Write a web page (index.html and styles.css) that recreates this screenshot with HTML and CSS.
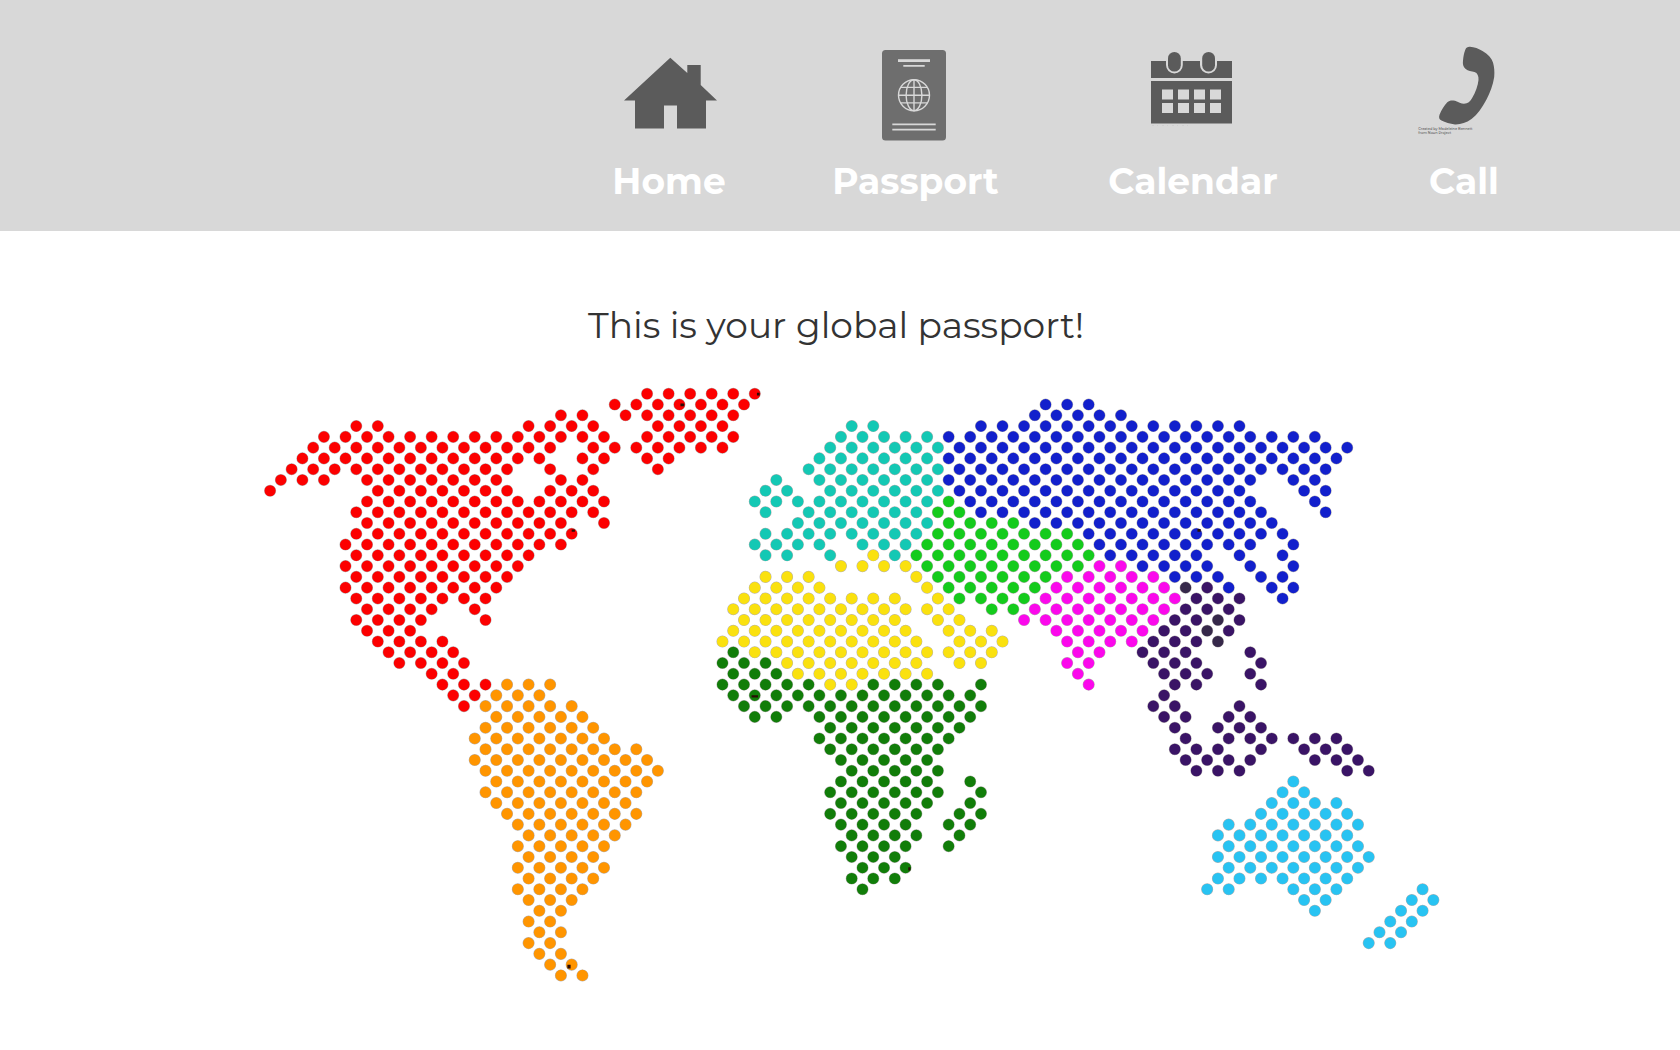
FILE: index.html
```html
<!DOCTYPE html>
<html lang="en">
<head>
<meta charset="utf-8">
<title>Global Passport</title>
<link rel="stylesheet" href="styles.css">
</head>
<body>
<header class="site-header">
  <nav class="nav">
    <a class="nav-item">
      <svg class="icon" viewBox="0 0 120 100"><path d="M60.3 17.7L77.3 33V25H90.7V45L107 60.5H96V88.4H67V65.6H54V88.4H25V60.5H14Z"/></svg>
      <span class="label label-home">Home</span>
    </a>
    <a class="nav-item">
      <svg class="icon icon-passport" viewBox="0 0 120 100">
        <rect x="26" y="10" width="64" height="90.4" rx="3.5"/>
        <g class="lines">
          <path stroke-width="2.8" d="M42 20.6H74"/>
          <path stroke-width="1.7" d="M47.3 25.9H68.7M36.3 84.4H79.7M36.3 89.7H79.7"/>
          <circle cx="58" cy="55.2" r="15.5"/>
          <ellipse cx="58" cy="55.2" rx="7.9" ry="15.5"/>
          <path d="M58 39.7V70.7M42.5 55.3H73.5M45 47.4H71M45 62.9H71"/>
        </g>
      </svg>
      <span class="label label-passport">Passport</span>
    </a>
    <a class="nav-item">
      <svg class="icon" viewBox="0 0 120 100">
        <path d="M18 21H33V25A8.4 8.4 0 0 0 49.8 25V21H67V25A8.5 8.4 0 0 0 84 25V21H99V38H18Z"/>
        <rect x="35" y="12" width="12.8" height="19.6" rx="6.4"/>
        <rect x="69.2" y="12" width="12.8" height="19.6" rx="6.4"/>
        <path fill-rule="evenodd" d="M18 41H99V83.4H18ZM29 49.5V59.6H40V49.5ZM45 49.5V59.6H56V49.5ZM61 49.5V59.6H72V49.5ZM77 49.5V59.6H88V49.5ZM29 63V73H40V63ZM45 63V73H56V63ZM61 63V73H72V63ZM77 63V73H88V63Z"/>
        <path class="trace" d="M19 85.5H55"/>
      </svg>
      <span class="label">Calendar</span>
    </a>
    <a class="nav-item">
      <svg class="icon" viewBox="0 0 120 100">
        <path d="M67 6.8C71 7 76 8.8 79.5 11C85 14.2 88.5 18 90 22.5C91.3 27 91.7 32 91.2 37C90 45 87 53 83.5 59.5C79 68 74 75 68.5 79C63 83 57.5 84.6 52 84.4C47 84 42 82.5 38.5 80.6C36 79.2 35.6 77.5 36.6 74.5C38.500 69.500 41.500 65.500 44.300 62.300C46.500 60.200 49 60.200 52 60.800C55.500 61.800 58 63.800 61 63.800C65 63.600 67 61.500 69 58.300C72.500 52.500 75 45.500 75.500 40C75.800 36 74.500 33 71.500 32C68.500 31 65 31 62.700 29C60 26.800 59.600 24 60 20.500C60.400 16.500 61 13 62.300 9.800C63.200 7.500 64.700 6.700 67 6.800Z"/>
        <text class="credit" x="15.3" y="90">Created by Madeleine Bennett</text>
        <text class="credit" x="15.3" y="93.7">from Noun Project</text>
      </svg>
      <span class="label label-call">Call</span>
    </a>
  </nav>
</header>
<main class="content">
  <h1 class="title">This is your global passport!</h1>
  <svg class="map" viewBox="-1.03 -1 110 56">
    <defs>
      <path id="north-america" d="M35 0H45.1M32 1H44.1M27 2H29.1M33 2H43.1M8 3H10.1M24 3H30.1M36 3H42.1M5 4H31.1M35 4H43.1M4 5H26.1M30 5H42.1M3 6H25.1M29 6H31.1M35 6H37.1M2 7H22.1M26 7h.1M30 7h.1M36 7h.1M1 8H5.1M9 8H21.1M27 8H29.1M0 9h.1M10 9H22.1M26 9H30.1M9 10H31.1M8 11H30.1M9 12H27.1M31 12h.1M8 13H28.1M7 14H27.1M8 15H24.1M7 16H23.1M8 17H22.1M7 18H21.1M8 19H20.1M9 20H15.1M19 20h.1M8 21H14.1M20 21h.1M9 22H13.1M10 23H16.1M11 24H17.1M12 25H18.1M15 26H17.1M16 27H20.1M17 28H19.1M18 29h.1"/>
      <path id="south-america" d="M22 27H26.1M21 28H25.1M20 29H28.1M21 30H29.1M20 31H30.1M19 32H31.1M20 33H34.1M19 34H35.1M20 35H36.1M21 36H35.1M20 37H34.1M21 38H33.1M22 39H34.1M23 40H33.1M24 41H32.1M23 42H31.1M24 43H30.1M23 44H31.1M24 45H30.1M23 46H29.1M24 47H28.1M25 48H27.1M24 49H26.1M25 50H27.1M24 51H26.1M25 52H27.1M26 53H28.1M27 54H29.1"/>
      <path id="europe" d="M54 3H56.1M53 4H61.1M52 5H62.1M51 6H61.1M50 7H62.1M47 8h.1M51 8H61.1M46 9H48.1M52 9H62.1M45 10H49.1M51 10H61.1M46 11h.1M50 11H60.1M49 12H61.1M46 13H60.1M45 14H51.1M55 14H59.1M46 15H48.1M52 15h.1M58 15h.1"/>
      <path id="north-africa" d="M56 15h.1M53 16H59.1M46 17H50.1M60 17h.1M45 18H51.1M61 18h.1M44 19H58.1M62 19h.1M43 20H63.1M44 21H58.1M62 21H64.1M43 22H59.1M63 22H67.1M42 23H60.1M64 23H68.1M45 24H67.1M48 25H60.1M64 25H66.1M49 26H61.1M52 27H54.1"/>
      <path id="africa" d="M43 24h.1M42 25H46.1M43 26H47.1M42 27H50.1M56 27H62.1M66 27h.1M43 28H65.1M44 29H66.1M45 30H47.1M51 30H65.1M52 31H64.1M51 32H63.1M52 33H62.1M53 34H61.1M54 35H62.1M53 36H61.1M65 36h.1M52 37H62.1M66 37h.1M53 38H61.1M65 38h.1M52 39H60.1M64 39H66.1M53 40H59.1M63 40H65.1M54 41H60.1M64 41h.1M53 42H59.1M63 42h.1M54 43H58.1M55 44H59.1M54 45H58.1M55 46h.1"/>
      <path id="russia" d="M72 1H76.1M71 2H79.1M66 3H90.1M63 4H97.1M64 5H100.1M63 6H99.1M64 7H98.1M63 8H91.1M95 8H97.1M64 9H90.1M96 9H98.1M65 10H91.1M97 10h.1M66 11H92.1M98 11h.1M71 12H93.1M76 13H94.1M77 14H91.1M95 14h.1M78 15H86.1M90 15h.1M94 15h.1M81 16H87.1M91 16h.1M95 16h.1M84 17H88.1M92 17H94.1M89 18h.1M93 18H95.1M94 19h.1"/>
      <path id="central-asia" d="M63 10h.1M62 11H64.1M63 12H69.1M62 13H74.1M61 14H75.1M60 15H76.1M61 16H75.1M62 17H72.1M63 18H71.1M64 19H70.1M67 20H69.1"/>
      <path id="south-asia" d="M77 16H79.1M74 17H82.1M73 18H83.1M72 19H84.1M71 20H83.1M70 21H82.1M73 22H81.1M74 23H80.1M75 24H77.1M74 25H76.1M75 26h.1M76 27h.1"/>
      <path id="east-asia" d="M87 18h.1M86 19H90.1M85 20H89.1M84 21H86.1M90 21h.1M83 22H85.1M89 22h.1M82 23H86.1M81 24H85.1M91 24h.1M82 25H86.1M92 25h.1M83 26H87.1M91 26h.1M84 27H86.1M92 27h.1M83 28h.1M82 29H84.1M90 29h.1M83 30H85.1M89 30H91.1M84 31h.1M88 31H92.1M85 32h.1M89 32H93.1M95 32H99.1M84 33H88.1M92 33h.1M96 33H100.1M85 34H91.1M97 34H101.1M86 35H90.1M100 35H102.1"/>
      <path id="korea" d="M85 18h.1M88 21h.1M87 22h.1M88 23h.1"/>
      <path id="oceania" d="M95 36h.1M94 37H96.1M93 38H99.1M92 39H100.1M89 40H101.1M88 41H100.1M89 42H101.1M88 43H102.1M89 44H101.1M88 45H100.1M87 46H89.1M95 46H99.1M107 46h.1M96 47H98.1M106 47H108.1M97 48h.1M105 48H107.1M104 49H106.1M103 50H105.1M102 51H104.1"/>
    </defs>
    <g class="region red"><use class="rim" href="#north-america"/><use href="#north-america"/></g>
    <g class="region orange"><use class="rim" href="#south-america"/><use href="#south-america"/></g>
    <g class="region teal"><use class="rim" href="#europe"/><use href="#europe"/></g>
    <g class="region yellow"><use class="rim" href="#north-africa"/><use href="#north-africa"/></g>
    <g class="region green"><use class="rim" href="#africa"/><use href="#africa"/></g>
    <g class="region blue"><use class="rim" href="#russia"/><use href="#russia"/></g>
    <g class="region lime"><use class="rim" href="#central-asia"/><use href="#central-asia"/></g>
    <g class="region magenta"><use class="rim" href="#south-asia"/><use href="#south-asia"/></g>
    <g class="region purple"><use class="rim" href="#east-asia"/><use href="#east-asia"/></g>
    <g class="region slate"><use class="rim" href="#korea"/><use href="#korea"/></g>
    <g class="region sky"><use class="rim" href="#oceania"/><use href="#oceania"/></g>
    <g class="specks"><path d="M45.200 -.1h.25v.25h-.25zM38.100 .9h.35v.25h-.35zM28 12.600h.3v.2h-.3zM27.600 53h.3v.35h-.3zM44.700 28h.6v.2h-.6zM59.250 43.950h.2v.3h-.2zM86.100 12.550h.3v.25h-.3z"/></g>
  </svg>
</main>
</body>
</html>
```

FILE: styles.css
```css
body {
  margin: 0;
  background: #fff;
  font-family: Montserrat, Inter, "Open Sans", sans-serif;
  color: #333;
}

.site-header {
  height: 231px;
  background: #d8d8d8;
}

.nav {
  display: grid;
  grid-template-columns: 248px 244px 310px 230px;
  padding: 40px 0 0 546px;
}

.nav-item {
  display: flex;
  flex-direction: column;
  align-items: center;
}

.icon {
  width: 120px;
  height: 100px;
  overflow: visible;
  fill: #5b5b5b;
}

.icon-passport {
  fill: #6e6e6e;
}

.lines {
  fill: none;
  stroke: #d8d8d8;
  stroke-width: 1.4;
}

.trace {
  stroke: #c4c4c4;
  stroke-width: 0.5;
  stroke-dasharray: 2 3 1 4;
}

.credit {
  font-size: 3.5px;
  font-weight: 500;
}

.label {
  margin-top: 19px;
  font-size: 36px;
  line-height: 44px;
  font-weight: 700;
  color: #fff;
  white-space: nowrap;
}

.label-home {
  margin-right: 2px;
}

.label-passport {
  margin-right: 1px;
}

.label-call {
  margin-left: 2px;
}

.content {
  display: flex;
  flex-direction: column;
}

.title {
  margin: 72px 0 0 588px;
  font-size: 36px;
  line-height: 44px;
  font-weight: 400;
  white-space: nowrap;
}

.map {
  width: 1184.8px;
  height: 603.2px;
  margin: 36px 0 0 259px;
}

.region {
  fill: none;
  stroke-width: 1.03;
  stroke-linecap: round;
  stroke-dasharray: 0 2;
}

.rim {
  stroke: #4a4040;
  stroke-width: 1.12;
  opacity: 0.4;
}

.red { stroke: #fc0000; }
.orange { stroke: #ff9500; }
.teal { stroke: #14c8b4; }
.yellow { stroke: #fae10f; }
.green { stroke: #117d09; }
.blue { stroke: #1220cc; }
.lime { stroke: #14cb1c; }
.magenta { stroke: #fb08ec; }
.purple { stroke: #3a1466; }
.slate { stroke: #36284a; }
.sky { stroke: #28c3f2; }

.specks {
  fill: #2a0d05;
}
```
